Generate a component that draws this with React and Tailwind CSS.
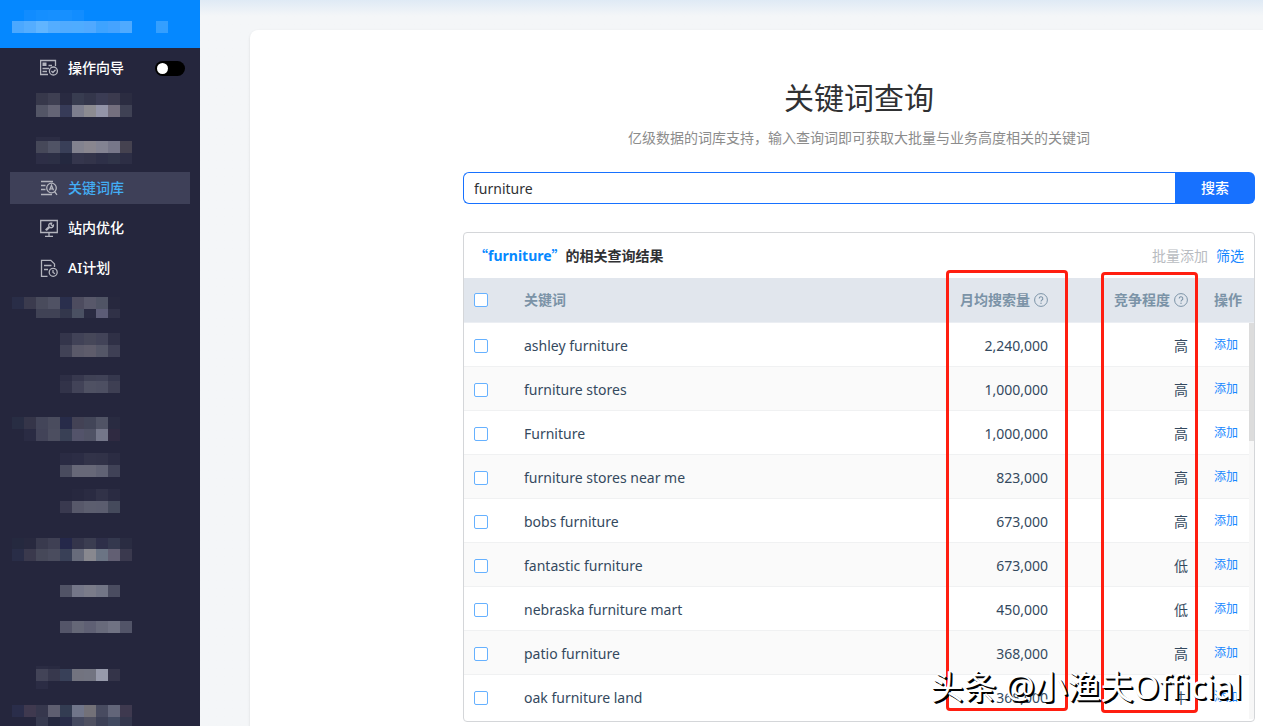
import React, { useState } from 'react';

const initialRows = [
    { keyword: 'ashley furniture', volume: '2,240,000', level: '高' },
    { keyword: 'furniture stores', volume: '1,000,000', level: '高' },
    { keyword: 'Furniture', volume: '1,000,000', level: '高' },
    { keyword: 'furniture stores near me', volume: '823,000', level: '高' },
    { keyword: 'bobs furniture', volume: '673,000', level: '高' },
    { keyword: 'fantastic furniture', volume: '673,000', level: '低' },
    { keyword: 'nebraska furniture mart', volume: '450,000', level: '低' },
    { keyword: 'patio furniture', volume: '368,000', level: '高' },
    { keyword: 'oak furniture land', volume: '368,000', level: '中' },
];

// Masked menu entries: every row is [height, first column, colours], cells are 12px wide
const maskedTop = [
    {
        top: 9,
        rows: [
            [12, 3, ['#37384b', '#3e3f52', '#292a41', '#383c50', '#34364b', '#3b3c54', '#3b3a4e', '#2b2c41']],
            [12, 3, ['#535566', '#646475', '#373b58', '#7d7e8e', '#8c8b91', '#9394a8', '#746f7e', '#3f4154']],
        ],
    },
    {
        top: 20,
        rows: [
            [4, 3, ['#2c2d44', '#2c2d44']],
            [12, 3, ['#464859', '#505365', '#393f58', '#82828f', '#89868f', '#838392', '#777789', '#454250']],
            [11, 3, ['#2d2e46', '#2c2f45', '#24283f', '#35364d', '#33344a', '#2e3048', '#303449', '#2d2e45']],
        ],
    },
];

const maskedBottom = [
    {
        top: 13,
        rows: [
            [12, 1, ['#292d47', '#3b3b4e', '#494b5c', '#505264', '#2a2f4d', '#4d4c5f', '#58586a', '#505465', '#27283e']],
            [9, 3, ['#404255', '#404255', '#33374c', '#4a5062', '#2a2b42', '#5c5c76', '#303147']],
        ],
    },
    {
        top: 15,
        rows: [
            [12, 5, ['#34354b', '#414257', '#464759', '#424358', '#2f3046']],
            [12, 5, ['#414256', '#5a5969', '#5e5c6b', '#545667', '#3e3f54']],
        ],
    },
    {
        top: 18,
        rows: [
            [6, 5, ['#2d2e45', '#37384e', '#3f4155', '#404257', '#35374d']],
            [12, 5, ['#323349', '#424358', '#4f5163', '#4d4f62', '#3e3f53']],
        ],
    },
    {
        top: 24,
        rows: [
            [12, 1, ['#282d43', '#353549', '#434559', '#4a4c5e', '#272b49', '#434255', '#424558', '#505365', '#292b41']],
            [12, 2, ['#2a2b43', '#424358', '#4c4e60', '#394055', '#53536a', '#505265', '#747689', '#2f2a41']],
        ],
    },
    {
        top: 12,
        rows: [
            [12, 5, ['#2a2b43', '#2c2d45', '#323349', '#313248', '#2b2c43']],
            [12, 5, ['#494b5e', '#676878', '#676878', '#606274', '#404257']],
        ],
    },
    {
        top: 12,
        rows: [
            [12, 5, ['#25263d', '#27283f', '#2a2b42', '#313248', '#2a2b42']],
            [12, 5, ['#39394f', '#57586a', '#5c5e6f', '#5b5d6f', '#454a5c']],
        ],
    },
    {
        top: 25,
        rows: [
            [11, 1, ['#25293f', '#28293f', '#393a4e', '#3f4054', '#25284a', '#34354b', '#3b3d51', '#2e2f49', '#34384e', '#2a2c42']],
            [12, 1, ['#292d47', '#3a394d', '#464859', '#4a4c5e', '#394057', '#676b7b', '#88888f', '#6b7484', '#625f73', '#3a394e']],
        ],
    },
    { top: 24, rows: [[12, 5, ['#515366', '#747688', '#7a7b89', '#727586', '#4a4c60']]] },
    { top: 24, rows: [[12, 5, ['#545569', '#656777', '#5f6074', '#686a7b', '#707283', '#525468']]] },
    {
        top: 33,
        rows: [
            [3, 3, ['#2b2c43', '#292a41']],
            [12, 3, ['#424357', '#37384d', '#384058', '#72737f', '#727481', '#979aab', '#343449']],
            [8, 3, ['#2b2c44']],
        ],
    },
    {
        top: 16,
        rows: [
            [12, 1, ['#2a2d4a', '#3f394f', '#36374d', '#5e5e70', '#333c52', '#70758a', '#737178', '#484b60', '#626579', '#3e394f']],
            [9, 3, ['#373a50', '#25283f', '#292c49', '#454960', '#4f5061', '#3c4056', '#414960', '#34374d']],
        ],
    },
];

const logoMask = {
    top: 10,
    rows: [
        [11, 2, ['#118cff', '#158fff', '#1790ff', '#1790ff', '#128dff']],
        [12, 1, ['#4ba8ff', '#54adff', '#61b5ff', '#54adff', '#50abff', '#4facff', '#50a9ff', '#3ea3ff', '#45a3ff', '#4faaff', '#0588ff', '#0588ff', '#349fff']],
    ],
};

const Mask = ({ top, rows }) => {
    let y = top;
    const cells = [];
    rows.forEach(([height, start, colors]) => {
        colors.forEach((color, i) => {
            cells.push(<rect key={`${y}-${i}`} x={(start + i) * 12} y={y} width="12" height={height} fill={color} />);
        });
        y += height;
    });
    return (
        <svg className="block" width="180" height={y} shapeRendering="crispEdges" aria-hidden="true">
            {cells}
        </svg>
    );
};

const GuideIcon = () => (
    <svg className="h-[18px] w-[18px] shrink-0" viewBox="0 0 18 18" fill="none" stroke="currentColor" strokeWidth="1.3" aria-hidden="true">
        <path d="M15.5 7V1.5H.6v14H8" />
        <path d="M2.5 3.5h4v3.5h-4z" fill="currentColor" stroke="none" />
        <path d="M8.500 6.500H12M2.500 9.500H9M2.500 12.500H7" />
        <circle cx="13.400" cy="12" r="4" />
        <path d="M11.400 12l1.500 1.500 2.600-2.800" />
    </svg>
);

const KeywordIcon = () => (
    <svg className="h-[18px] w-[18px] shrink-0" viewBox="0 0 18 18" fill="none" stroke="currentColor" strokeWidth="1.3" aria-hidden="true">
        <path d="M1 2.500h12M1 6.500h4.500M1 10.500h4.500M1 15.500h11" />
        <circle cx="11.500" cy="9" r="4.800" />
        <path d="M9.500 11.300l2-5 2 5M10.300 9.800h2.400M14.500 12.500l2.500 3.300" />
    </svg>
);

const MonitorIcon = () => (
    <svg className="h-[18px] w-[18px] shrink-0" viewBox="0 0 18 18" fill="none" stroke="currentColor" strokeWidth="1.3" aria-hidden="true">
        <path d="M.7 1.500h16.600v12H.7zM5 17.300h8M9 13.500v3.500" />
        <path d="M5.500 11l3.800-3.800M9 7.500a2.300 2.300 0 0 1 2.700-3.300l-.7 1.500 1.200 1.100 1.300-.7A2.300 2.300 0 0 1 9.800 8.200l-3.500 3.300" />
    </svg>
);

const PlanIcon = () => (
    <svg className="h-[18px] w-[18px] shrink-0" viewBox="0 0 18 18" fill="none" stroke="currentColor" strokeWidth="1.3" aria-hidden="true">
        <path d="M7.500 17.300H1.500V1.300h9.300l3.700 3.600V8" />
        <path d="M4 6.500h7.500M4 10.500h4" />
        <circle cx="13.200" cy="13.300" r="4" />
        <path d="M13 11v2.500l2 1.300" />
    </svg>
);

const HelpIcon = () => (
    <svg className="h-[14px] w-[14px] shrink-0" viewBox="0 0 14 14" fill="none" stroke="currentColor" aria-hidden="true">
        <circle cx="7" cy="7" r="6.400" />
        <path d="M5.200 5.600a1.800 1.800 0 1 1 2.700 1.500c-.6.400-.9.700-.9 1.400" strokeWidth="1.100" />
        <circle cx="7" cy="10.200" r=".7" fill="currentColor" stroke="none" />
    </svg>
);

const NavItem = ({ icon, label, active }) => (
    <a
        href="#"
        className={`flex h-8 items-center gap-[10px] pl-[30px] text-sm font-medium ${active ? 'bg-[#3e4058] text-[#43aef5]' : 'text-white'}`}
    >
        <span className="text-[#b4b5be]">{icon}</span>
        {label}
    </a>
);

const Sidebar = () => {
    const [guide, setGuide] = useState(false);

    return (
        <aside className="h-screen w-[200px] shrink-0 overflow-hidden bg-[#25263d]">
            <div className="h-12 bg-[#0588ff]">
                <Mask {...logoMask} />
            </div>
            <nav className="pt-1">
                <div className="mx-[10px] flex items-center justify-between pr-[5px]">
                    <NavItem icon={<GuideIcon />} label="操作向导" />
                    <button
                        type="button"
                        role="switch"
                        aria-checked={guide}
                        aria-label="操作向导"
                        onClick={() => setGuide(!guide)}
                        className={`flex h-[15px] w-[30px] items-center rounded-full bg-black px-[2px] ${guide ? 'justify-end' : ''}`}
                    >
                        <span className="h-[11px] w-[11px] rounded-full bg-white"></span>
                    </button>
                </div>
                {maskedTop.map((mask, i) => (
                    <Mask key={i} {...mask} />
                ))}
                <div className="mx-[10px] mt-2 flex flex-col gap-2">
                    <NavItem icon={<KeywordIcon />} label="关键词库" active />
                    <NavItem icon={<MonitorIcon />} label="站内优化" />
                    <NavItem icon={<PlanIcon />} label="AI计划" />
                </div>
                {maskedBottom.map((mask, i) => (
                    <Mask key={i} {...mask} />
                ))}
            </nav>
        </aside>
    );
};

const Checkbox = ({ label, checked, onChange }) => (
    <input
        type="checkbox"
        aria-label={label}
        checked={checked}
        onChange={onChange}
        className="block h-[14px] w-[14px] appearance-none rounded-[2px] border border-[#66b1ff] bg-white checked:bg-[#66b1ff]"
    />
);

const ResultTable = () => {
    const [selected, setSelected] = useState([]);
    const allSelected = selected.length === initialRows.length;

    const toggle = (keyword) => {
        setSelected(selected.includes(keyword) ? selected.filter((k) => k !== keyword) : [...selected, keyword]);
    };

    return (
        <div className="relative">
            <table className="w-full table-fixed border-separate border-spacing-0 text-sm text-[#34495e]">
                <colgroup>
                    <col className="w-[50px]" />
                    <col />
                    <col className="w-[160px]" />
                    <col className="w-[140px]" />
                    <col className="w-14" />
                </colgroup>
                <thead className="bg-[#e1e6ed] text-[#7b93a7]">
                    <tr className="*:border-b *:border-[#ebeef3]">
                        <th className="h-[45px] pl-[10px]">
                            <Checkbox
                                label="全选"
                                checked={allSelected}
                                onChange={() => setSelected(allSelected ? [] : initialRows.map((r) => r.keyword))}
                            />
                        </th>
                        <th className="pl-[10px] text-left">关键词</th>
                        <th className="pr-[10px]">
                            <span className="flex items-center justify-end gap-1">月均搜索量<HelpIcon /></span>
                        </th>
                        <th className="pr-[10px]">
                            <span className="flex items-center justify-end gap-1">竞争程度<HelpIcon /></span>
                        </th>
                        <th className="pl-4 text-left">操作</th>
                    </tr>
                </thead>
                <tbody>
                    {initialRows.map(({ keyword, volume, level }) => (
                        <tr key={keyword} className="even:bg-[#fafafa] *:border-b *:border-[#f0f1f2] last:*:border-transparent">
                            <td className="h-11 pt-[2px] pl-[10px]">
                                <Checkbox label={keyword} checked={selected.includes(keyword)} onChange={() => toggle(keyword)} />
                            </td>
                            <td className="pt-[2px] pl-[10px]">{keyword}</td>
                            <td className="pt-[2px] pr-[10px] text-right">{volume}</td>
                            <td className="pt-[2px] pr-[10px] text-right">{level}</td>
                            <td className="pl-4">
                                <button type="button" className="block text-xs text-[#1787ff]">添加</button>
                            </td>
                        </tr>
                    ))}
                </tbody>
            </table>
            {/* Scrollbar */}
            <div className="absolute top-[45px] right-0 bottom-0 w-[5px] bg-[#f7f7f7]">
                <div className="h-[118px] bg-[#dcdcdc]"></div>
            </div>
        </div>
    );
};

const App = () => {
    const [query, setQuery] = useState('furniture');

    return (
        <div className="flex h-screen overflow-hidden bg-[#f4f6f8] font-['Noto_Sans','Noto_Sans_CJK_SC',sans-serif]">
            <Sidebar />
            <main className="flex min-w-0 flex-1 bg-linear-to-b from-[#dfeaf5] to-[#f4f6f8] to-[16px] pt-[30px] pl-[50px]">
                <div className="min-w-0 flex-1 rounded-tl-lg bg-white pt-12 pr-2 pl-[213px] shadow-sm">
                    <h1 className="text-center text-[30px] leading-10 text-[#303133]">关键词查询</h1>
                    <p className="mt-[10px] text-center text-sm text-[#8c8c8c]">
                        亿级数据的词库支持，输入查询词即可获取大批量与业务高度相关的关键词
                    </p>

                    <form className="mt-6 flex" onSubmit={(e) => e.preventDefault()}>
                        <input
                            type="text"
                            aria-label="关键词"
                            value={query}
                            onChange={(e) => setQuery(e.target.value)}
                            className="h-8 min-w-0 flex-1 rounded-l-md border border-r-0 border-[#1771ff] px-[10px] text-sm text-[#303133] outline-none"
                        />
                        <button type="submit" className="h-8 w-20 rounded-r-md bg-[#1771ff] text-sm font-medium text-white">
                            搜索
                        </button>
                    </form>

                    <section className="relative mt-7 rounded border border-[#d4d6d9] pb-[2px]">
                        <div className="flex h-[45px] items-center justify-between px-[10px] text-sm">
                            <h2 className="font-['Noto_Sans_CJK_SC',sans-serif] font-bold text-[#303133]">
                                <span className="text-[#0588ff]">
                                    “<span className="font-['Noto_Sans',sans-serif]">furniture</span>”
                                </span>
                                的相关查询结果
                            </h2>
                            <div className="flex gap-2">
                                <button type="button" className="text-[#b9bcc1]">批量添加</button>
                                <button type="button" className="text-[#1787ff]">筛选</button>
                            </div>
                        </div>
                        <ResultTable />

                        {/* Highlighted columns */}
                        <div className="pointer-events-none absolute top-[37px] right-[186px] h-[441px] w-[122px] rounded border-3 border-[#ff1e10]"></div>
                        <div className="pointer-events-none absolute top-[39px] right-14 h-[441px] w-[97px] rounded border-3 border-[#ff1e10]"></div>
                        <div className="pointer-events-none absolute right-3 bottom-[14px] text-[33px] leading-10 whitespace-nowrap text-white [text-shadow:1px_1px_0_#000,2px_2px_0_#000]">
                            头条 @小渔夫Official
                        </div>
                    </section>
                </div>
            </main>
        </div>
    );
};

export default App;
